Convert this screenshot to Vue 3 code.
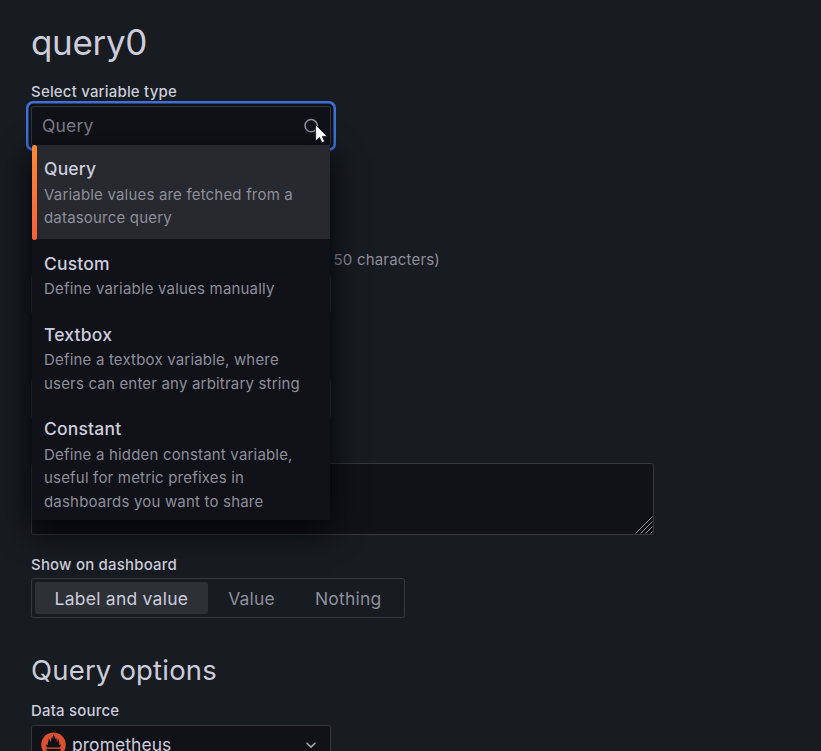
<script setup>
const types = [
  { name: 'Query', text: 'Variable values are fetched from a datasource query' },
  { name: 'Custom', text: 'Define variable values manually' },
  { name: 'Textbox', text: 'Define a textbox variable, where users can enter any arbitrary string' },
  { name: 'Constant', text: 'Define a hidden constant variable, useful for metric prefixes in dashboards you want to share' },
]
const visibility = ['Label and value', 'Value', 'Nothing']
</script>

<template>
  <main class="page">
    <h1>query0</h1>

    <section class="field type-field">
      <div class="label">Select variable type</div>
      <div class="select focused">
        <span class="placeholder">Query</span>
        <svg class="search" width="20" height="20" viewBox="0 0 24 24" fill="none" stroke="currentColor" stroke-width="1.9" stroke-linecap="round">
          <circle cx="11" cy="11.5" r="7.4" />
        </svg>
        <div class="menu">
          <div v-for="(t, i) in types" :key="t.name" class="option" :class="{ active: i === 0 }">
            <div class="option-name">{{ t.name }}</div>
            <div class="option-text">{{ t.text }}</div>
          </div>
        </div>
        <svg class="cursor" width="13" height="20" viewBox="0 0 13 20">
          <path d="M.6 .8V17L4.5 13.4L6.8 18.7L9.6 17.5L7.3 12.4H12.2Z" fill="#fff" stroke="#000" stroke-width=".7" />
        </svg>
      </div>
    </section>

    <section class="field name-field">
      <div class="hint">(Max. 50 characters)</div>
      <div class="input"></div>
    </section>

    <section class="field label-field">
      <div class="input"></div>
    </section>

    <section class="field desc-field">
      <div class="textarea">
        <svg width="18" height="18" viewBox="0 0 18 18" stroke="#96969f" stroke-width="1">
          <path d="M0.5 17.5L17.5 .5M5.5 17.5L17.5 5.5M10.5 17.5L17.5 10.5M15.5 17.5L17.5 15.5" />
        </svg>
      </div>
    </section>

    <section class="field show-field">
      <div class="label">Show on dashboard</div>
      <div class="segments">
        <div v-for="(v, i) in visibility" :key="v" class="segment" :class="{ chosen: i === 0 }">{{ v }}</div>
      </div>
    </section>

    <h2 class="options-title">Query options</h2>

    <section class="field source-field">
      <div class="label">Data source</div>
      <div class="select">
        <svg class="logo" width="25" height="25" viewBox="0 0 25 25">
          <circle cx="12.5" cy="12.8" r="12.3" fill="#dc4f31" />
          <path d="M6.4 15.6C5.4 14.4 5 13.6 4.8 12.6L7 13C6.3 10.6 7.8 8.8 7.8 6.4C9 7.5 9.1 8.8 9.5 10C10.3 8.6 10.2 7.4 10.5 5.2L11.4 6.8C11.8 5 11.8 3.6 12.5 1.8C13 3.7 14.1 4.9 14.3 7.4L15 5.2C15.8 7 15.6 8.6 16 10C16.6 9 16.7 8 16.8 6.6C18.2 8.8 18.7 10.5 18 13L20.2 12.6C19.9 13.8 19.5 14.6 18.6 15.6Z" fill="#111217" />
          <rect x="5.5" y="16.8" width="14" height="2.2" fill="#111217" />
          <path d="M8 20.2H17C16.5 22.7 8.5 22.7 8 20.2Z" fill="#111217" />
        </svg>
        <span class="source">prometheus</span>
        <svg class="chevron" width="20" height="20" viewBox="0 0 20 20" fill="none" stroke="currentColor" stroke-width="1.6" stroke-linecap="round" stroke-linejoin="round">
          <path d="M6 8.2L10 12.1L14 8.2" />
        </svg>
      </div>
    </section>
  </main>
</template>

<style>
html, body { background: #181b1f; overflow: hidden; }
</style>

<style scoped>
* { box-sizing: border-box; }
.page {
  height: 751px;
  overflow: hidden;
  padding: 21px 31px 0;
  background: #181b1f;
  color: #ccccdc;
  font-family: Inter, "Liberation Sans", sans-serif;
  font-size: 17.5px;
  letter-spacing: 0.1875px;
}
h1 { margin: 0; height: 59px; font-size: 35px; line-height: 42px; font-weight: 400; letter-spacing: -0.00893em; }
h2 { margin: 0; font-size: 27.5px; line-height: 35px; font-weight: 400; }
.label { font-size: 15px; line-height: 19px; font-weight: 500; }
.hint { width: 409px; font-size: 15px; line-height: 19px; color: #8e8e9a; text-align: right; white-space: nowrap; }
.type-field { padding-top: 2px; height: 98px; }
.type-field .select { margin-top: 5px; }
.select {
  position: relative;
  width: 300px;
  height: 40px;
  display: flex;
  align-items: center;
  padding: 0 9px 0 10px;
  background: #111217;
  border: 1px solid #36373d;
  border-radius: 2.5px;
}
.focused { padding-right: 8px; box-shadow: 0 0 0 2.5px #111217, 0 0 0 5px #3d71d9; }
.placeholder { flex: 1; color: #7d7d88; padding-bottom: 2px; }
.search { color: #8e8e9a; }
.menu {
  position: absolute;
  z-index: 2;
  left: 0;
  top: 38px;
  width: 298px;
  height: 375px;
  overflow: hidden;
  background: #111217;
  box-shadow: 0 10px 30px #010409;
}
.option { position: relative; padding: 10px 20px 10px 12px; }
.active { background: linear-gradient(#28292e, #28292e) no-repeat 0 0 / 100% 94px; }
.active::before {
  content: "";
  position: absolute;
  left: 0;
  top: 0;
  bottom: 0;
  width: 5px;
  border-radius: 2.5px;
  background: linear-gradient(#ff8833, #f55f3e);
}
.option-name { font-weight: 500; line-height: 27.5px; }
.option-text { font-size: 15px; line-height: 23.57px; color: #8e8e9a; }
.cursor { position: absolute; z-index: 3; left: 283px; top: 17px; }
.name-field { padding-top: 72px; height: 153px; }
.label-field { padding-top: 44px; height: 105px; }
.input { width: 300px; height: 40px; border: 1px solid #36373d; border-radius: 2.5px; background: #111217; }
.name-field .input { margin-top: 5px; }
.label-field .input { margin-top: 4px; }
.desc-field { padding-top: 27px; height: 119px; }
.textarea {
  display: flex;
  align-items: flex-end;
  justify-content: flex-end;
  width: 623px;
  height: 72px;
  padding: 1px 0 0 1px;
  border: 1px solid #36373d;
  border-radius: 2.5px;
  background: #111217;
}
.show-field { height: 98px; }
.segments { display: inline-flex; height: 40px; margin-top: 4px; padding: 3px; border: 1px solid #36393f; border-radius: 2.5px; }
.segment { display: flex; align-items: center; padding: 0 20px; color: #8e8e9a; border-radius: 2.5px; }
.segment:not(.chosen) { position: relative; left: .5px; }
.chosen { padding: 0 19.5px; background: #2d3035; color: #ccccdc; letter-spacing: .25px; }
.options-title { height: 48px; }
.source-field .select { margin-top: 5px; }
.logo { margin-left: -1px; position: relative; top: -1px; }
.source { flex: 1; margin-left: 6px; padding-bottom: 2px; letter-spacing: 0.05px; }
.chevron { color: #a4a4b0; }
</style>
